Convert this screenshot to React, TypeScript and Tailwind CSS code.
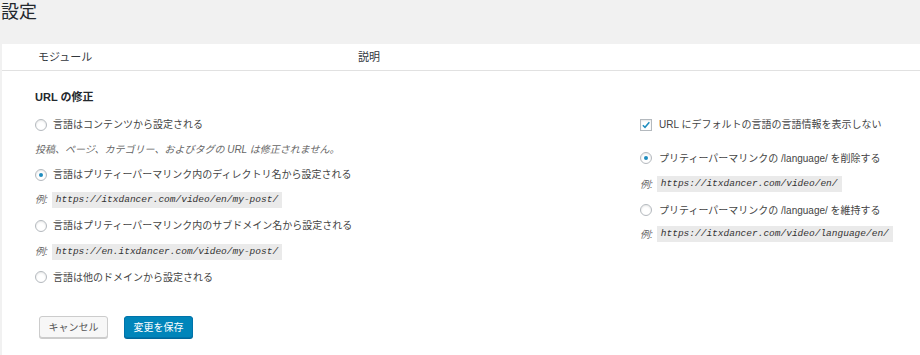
import React, { useState } from 'react';

const FONT = { fontFamily: '"Liberation Sans", "Noto Sans CJK JP", sans-serif' };
const MONO = { fontFamily: '"Liberation Mono", "Noto Sans CJK JP", monospace' };

const Radio = ({ checked, onClick }: { checked: boolean; onClick: () => void }) => (
  <span
    onClick={onClick}
    className="flex h-[12px] w-[12px] shrink-0 items-center justify-center rounded-full border border-[#b4b9be] bg-white shadow-[inset_0_1px_2px_rgba(0,0,0,0.1)]"
  >
    {checked && <span className="h-[4px] w-[4px] rounded-full bg-[#1e8cbe]" />}
  </span>
);

const Example = ({ url }: { url: string }) => (
  <div className="flex items-center italic text-[#666]">
    <span className="mr-[4px] text-[10px]">例:</span>
    <code
      style={MONO}
      className="inline-block h-[16px] bg-[#eaeaea] px-[4px] text-[9.5px] leading-[16px] text-[#333]"
    >
      {url}
    </code>
  </div>
);

const App = () => {
  const [mode, setMode] = useState(1);
  const [hideDefault, setHideDefault] = useState(true);
  const [rewrite, setRewrite] = useState(0);

  // left column options
  const modes = [
    'コンテンツから',
    'プリティーパーマリンク内のディレクトリ名から',
    'プリティーパーマリンク内のサブドメイン名から',
    '他のドメインから',
  ];

  return (
    <div style={FONT} className="h-[355px] w-[920px] overflow-hidden bg-[#f1f1f1] text-[#444]">
      {/* Title */}
      <div className="h-[44px]">
        <h1 className="pl-[1px] text-[18px] leading-[25px] text-[#23282d]">設定</h1>
      </div>

      <div className="ml-[2px] h-[311px] bg-white">
        {/* Table header */}
        <div className="flex h-[27px] items-center border-b border-[#e1e1e1] text-[11px] text-[#32373c]">
          <span className="ml-[36px] w-[320px]">モジュール</span>
          <span>説明</span>
        </div>

        <div className="pl-[33px] pt-[18px]">
          <h2 className="text-[11px] font-bold leading-[16px] text-[#23282d]">URL の修正</h2>

          <div className="mt-[7px] flex">
            {/* Left column */}
            <div className="w-[605px]">
              <div className="flex h-[25px] items-center gap-[6px] text-[10px]">
                <Radio checked={mode === 0} onClick={() => setMode(0)} />
                <span>言語は{modes[0]}設定される</span>
              </div>
              <div className="flex h-[25px] items-center text-[10px] italic text-[#666]">
                投稿、ページ、カテゴリー、およびタグの URL は修正されません。
              </div>
              <div className="flex h-[25px] items-center gap-[6px] text-[10px]">
                <Radio checked={mode === 1} onClick={() => setMode(1)} />
                <span>言語は{modes[1]}設定される</span>
              </div>
              <div className="flex h-[25px] items-center">
                <Example url="https://itxdancer.com/video/en/my-post/" />
              </div>
              <div className="flex h-[27px] items-center gap-[6px] text-[10px]">
                <Radio checked={mode === 2} onClick={() => setMode(2)} />
                <span>言語は{modes[2]}設定される</span>
              </div>
              <div className="flex h-[25px] items-center">
                <Example url="https://en.itxdancer.com/video/my-post/" />
              </div>
              <div className="flex h-[26px] items-center gap-[6px] text-[10px]">
                <Radio checked={mode === 3} onClick={() => setMode(3)} />
                <span>言語は{modes[3]}設定される</span>
              </div>

              {/* Buttons */}
              <div className="ml-[4px] mt-[26px] flex gap-[16px] text-[10px]">
                <button className="h-[22px] w-[69px] rounded-[3px] border border-[#ccc] bg-[#f7f7f7] text-[#555] shadow-[0_1px_0_#ccc]">
                  キャンセル
                </button>
                <button className="h-[22px] w-[69px] rounded-[3px] border border-[#0073aa] bg-[#0085ba] text-white shadow-[0_1px_0_#006799]">
                  変更を保存
                </button>
              </div>
            </div>

            {/* Right column */}
            <div className="text-[10px]">
              <label className="flex h-[25px] items-center gap-[7px]">
                <span
                  onClick={() => setHideDefault(!hideDefault)}
                  className="flex h-[12px] w-[12px] items-center justify-center border border-[#b4b9be] bg-white shadow-[inset_0_1px_2px_rgba(0,0,0,0.1)]"
                >
                  {hideDefault && (
                    <svg viewBox="0 0 12 12" className="h-[12px] w-[12px]">
                      <path d="M2.2 6.2 L4.8 8.8 L10 2.6" fill="none" stroke="#1e8cbe" strokeWidth="1.8" />
                    </svg>
                  )}
                </span>
                <span>URL にデフォルトの言語の言語情報を表示しない</span>
              </label>
              <div className="mt-[8px] flex h-[26px] items-center gap-[7px]">
                <Radio checked={rewrite === 0} onClick={() => setRewrite(0)} />
                <span>プリティーパーマリンクの /language/ を削除する</span>
              </div>
              <div className="flex h-[26px] items-center">
                <Example url="https://itxdancer.com/video/en/" />
              </div>
              <div className="flex h-[26px] items-center gap-[7px]">
                <Radio checked={rewrite === 1} onClick={() => setRewrite(1)} />
                <span>プリティーパーマリンクの /language/ を維持する</span>
              </div>
              <div className="flex h-[22px] items-center">
                <Example url="https://itxdancer.com/video/language/en/" />
              </div>
            </div>
          </div>
        </div>
      </div>
    </div>
  );
};

export default App;
